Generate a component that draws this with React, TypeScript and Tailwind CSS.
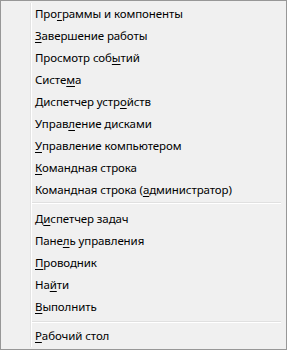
import type { ReactNode } from "react";

type MenuItem = {
    label: string;
    at: number;
};

const groups: MenuItem[][] = [
    [
        { label: "Программы и компоненты", at: 3 },
        { label: "Завершение работы", at: 0 },
        { label: "Просмотр событий", at: 12 },
        { label: "Система", at: 5 },
        { label: "Диспетчер устройств", at: 14 },
        { label: "Управление дисками", at: 5 },
        { label: "Управление компьютером", at: 0 },
        { label: "Командная строка", at: 0 },
        { label: "Командная строка (администратор)", at: 18 },
    ],
    [
        { label: "Диспетчер задач", at: 1 },
        { label: "Панель управления", at: 4 },
        { label: "Проводник", at: 0 },
        { label: "Найти", at: 2 },
        { label: "Выполнить", at: 0 },
    ],
    [{ label: "Рабочий стол", at: 0 }],
];

function Label({ label, at }: MenuItem): ReactNode {
    return (
        <>
            {label.slice(0, at)}
            <span className="underline underline-offset-2">{label[at]}</span>
            {label.slice(at + 1)}
        </>
    );
}

function Separator({ last }: { last: boolean }) {
    return (
        <div className={`flex flex-col pr-[3px] ${last ? "pt-[3px] pb-[2px]" : "pt-[1px] pb-[4px]"}`}>
            <div className="h-px bg-[#e0e0e0]" />
            <div className="h-px bg-white" />
        </div>
    );
}

export default function App() {
    return (
        <div
            className="w-[287px] h-[350px] box-border border border-[#979797] bg-[#f0f0f0] p-[2px] flex text-[11.5px] tracking-[-0.1px] text-black"
            style={{ fontFamily: '"Segoe UI", "Noto Sans", sans-serif' }}
        >
            <div className="w-[28px] shrink-0 border-r border-[#e3e3e3]" />
            <div className="flex-1 flex flex-col border-l border-white">
                {groups.map((group, gi) => (
                    <div key={gi} className="flex flex-col">
                        {gi > 0 && <Separator last={gi === groups.length - 1} />}
                        {group.map((item) => (
                            <div
                                key={item.label}
                                className="h-[22px] flex items-center pl-[3px] whitespace-nowrap"
                            >
                                <Label label={item.label} at={item.at} />
                            </div>
                        ))}
                    </div>
                ))}
            </div>
        </div>
    );
}
